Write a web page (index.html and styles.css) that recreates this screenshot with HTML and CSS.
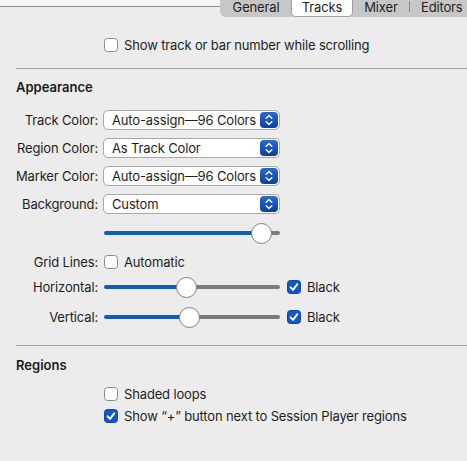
FILE: index.html
```html
<!DOCTYPE html>
<html>
<head>
<meta charset="utf-8">
<link rel="stylesheet" href="styles.css">
</head>
<body>
<div class="titlebar">
  <div class="rule"></div>
  <nav class="tabs">
    <span class="tab general">General</span>
    <span class="tab sel">Tracks</span>
    <span class="tab mixer">Mixer</span>
    <span class="divider"></span>
    <span class="tab editors">Editors</span>
  </nav>
</div>

<div class="top-option">
  <span class="check"></span>
  <span class="check-label">Show track or bar number while scrolling</span>
</div>

<hr class="sep first-sep">

<h2 class="heading">Appearance</h2>

<div class="form">
  <div class="row">
    <span class="label">Track Color:</span>
    <div class="popup"><span class="popup-text">Auto-assign—96 Colors</span><span class="stepper"><svg width="18" height="18" viewBox="0 0 18 18"><path d="M6.2 7.2 L9 4.6 L11.8 7.2 M6.2 10.8 L9 13.4 L11.8 10.8" fill="none" stroke="#fff" stroke-width="1.4" stroke-linecap="round" stroke-linejoin="round"/></svg></span></div>
  </div>
  <div class="row">
    <span class="label">Region Color:</span>
    <div class="popup"><span class="popup-text">As Track Color</span><span class="stepper"><svg width="18" height="18" viewBox="0 0 18 18"><path d="M6.2 7.2 L9 4.6 L11.8 7.2 M6.2 10.8 L9 13.4 L11.8 10.8" fill="none" stroke="#fff" stroke-width="1.4" stroke-linecap="round" stroke-linejoin="round"/></svg></span></div>
  </div>
  <div class="row">
    <span class="label">Marker Color:</span>
    <div class="popup"><span class="popup-text">Auto-assign—96 Colors</span><span class="stepper"><svg width="18" height="18" viewBox="0 0 18 18"><path d="M6.2 7.2 L9 4.6 L11.8 7.2 M6.2 10.8 L9 13.4 L11.8 10.8" fill="none" stroke="#fff" stroke-width="1.4" stroke-linecap="round" stroke-linejoin="round"/></svg></span></div>
  </div>
  <div class="row">
    <span class="label">Background:</span>
    <div class="popup"><span class="popup-text">Custom</span><span class="stepper"><svg width="18" height="18" viewBox="0 0 18 18"><path d="M6.2 7.2 L9 4.6 L11.8 7.2 M6.2 10.8 L9 13.4 L11.8 10.8" fill="none" stroke="#fff" stroke-width="1.4" stroke-linecap="round" stroke-linejoin="round"/></svg></span></div>
  </div>
  <div class="row slider-row bg-slider">
    <span class="label"></span>
    <div class="slider" style="--pos:157px"><span class="fill"></span><span class="rest"></span><span class="thumb"></span></div>
  </div>
  <div class="row grid-row">
    <span class="label">Grid Lines:</span>
    <span class="check"></span>
    <span class="check-label">Automatic</span>
  </div>
  <div class="row slider-row h-row">
    <span class="label">Horizontal:</span>
    <div class="slider" style="--pos:82px"><span class="fill"></span><span class="rest"></span><span class="thumb"></span></div>
    <span class="check on"><svg width="14" height="14" viewBox="0 0 14 14"><path d="M3.6 7.3 L6 9.9 L10.4 4.2" fill="none" stroke="#fff" stroke-width="1.9" stroke-linecap="round" stroke-linejoin="round"/></svg></span>
    <span class="check-label">Black</span>
  </div>
  <div class="row slider-row v-row">
    <span class="label">Vertical:</span>
    <div class="slider" style="--pos:85px"><span class="fill"></span><span class="rest"></span><span class="thumb"></span></div>
    <span class="check on"><svg width="14" height="14" viewBox="0 0 14 14"><path d="M3.6 7.3 L6 9.9 L10.4 4.2" fill="none" stroke="#fff" stroke-width="1.9" stroke-linecap="round" stroke-linejoin="round"/></svg></span>
    <span class="check-label">Black</span>
  </div>
</div>

<hr class="sep second-sep">

<h2 class="heading regions-heading">Regions</h2>

<div class="options">
  <div class="option">
    <span class="check"></span>
    <span class="check-label">Shaded loops</span>
  </div>
  <div class="option">
    <span class="check on"><svg width="14" height="14" viewBox="0 0 14 14"><path d="M3.6 7.3 L6 9.9 L10.4 4.2" fill="none" stroke="#fff" stroke-width="1.9" stroke-linecap="round" stroke-linejoin="round"/></svg></span>
    <span class="check-label">Show “+” button next to Session Player regions</span>
  </div>
</div>
</body>
</html>
```

FILE: styles.css
```css
* { box-sizing: border-box; }

html, body {
  margin: 0;
  padding: 0;
  background: #ececec;
  color: #1e1e1e;
  font-family: Inter, "Liberation Sans", Arial, sans-serif;
  font-size: 13px;
  letter-spacing: -0.15px;
  width: 467px;
  height: 461px;
  overflow: hidden;
}

/* ---------- title / tab bar ---------- */
.titlebar {
  display: flex;
  height: 17px;
}

.rule {
  flex: 1;
  height: 7px;
  background: #f5f5f5;
  border-bottom: 1px solid #8e8e8e;
}

.tabs {
  width: 247px;
  flex: none;
  height: 17px;
  background: #c7c7c7;
  border-bottom-left-radius: 6px;
  display: flex;
  align-items: stretch;
  padding-left: 1px;
  white-space: nowrap;
  overflow: hidden;
}

.tab {
  flex: none;
  display: flex;
  align-items: center;
  justify-content: center;
  line-height: 13px;
  padding-bottom: 3px;
  color: #1e1e1e;
}

.tab.general { width: 70px; }

.tab.sel {
  width: 62px;
  background: #ffffff;
  border: 1px solid #9f9f9f;
  border-top: none;
  border-radius: 0 0 5px 5px;
  padding-bottom: 2px;
}

.tab.mixer { width: 56px; }

.divider {
  flex: none;
  width: 1px;
  height: 11px;
  margin-top: 1px;
  background: #8a8a8a;
}

.tab.editors {
  width: 57px;
  justify-content: flex-start;
  padding-left: 11px;
}

/* ---------- checkbox ---------- */
.check {
  width: 14px;
  height: 14px;
  flex: none;
  border-radius: 3.5px;
  background: #ffffff;
  border: 1px solid #8a8a8a;
  display: inline-flex;
  align-items: center;
  justify-content: center;
}

.check.on {
  background: #1456c2;
  border: 1px solid #0d47a6;
}

.check.on svg { display: block; margin: -1px; }

.check-label {
  margin-left: 6px;
  white-space: nowrap;
  line-height: 16px;
}

/* ---------- top option ---------- */
.top-option {
  display: flex;
  align-items: center;
  height: 20px;
  margin-top: 18px;
  padding-left: 104px;
}

/* ---------- separators and headings ---------- */
.sep {
  border: none;
  height: 1px;
  background: #a6a6a6;
  margin: 0 0 0 16px;
}

.first-sep { margin-top: 13px; }

.heading {
  margin: 10px 0 0 16px;
  font-size: 13px;
  font-weight: 600;
  letter-spacing: 0;
  line-height: 16px;
  height: 16px;
  color: #1a1a1a;
}

/* ---------- form ---------- */
.form {
  margin-top: 15px;
  display: flex;
  flex-direction: column;
  gap: 8px;
}

.row {
  display: flex;
  align-items: center;
  height: 20px;
}

.label {
  width: 98px;
  flex: none;
  text-align: right;
  margin-right: 5px;
  white-space: nowrap;
}

.popup {
  width: 177px;
  height: 20px;
  background: #ffffff;
  border: 1px solid #a8a8a8;
  border-radius: 5px;
  display: flex;
  align-items: center;
  padding-left: 8px;
  padding-right: 1px;
}

.popup-text {
  flex: 1;
  white-space: nowrap;
  line-height: 16px;
}

.stepper {
  width: 18px;
  height: 16px;
  border-radius: 4px;
  background: linear-gradient(#2a69d2, #0c3f9e);
  display: flex;
  align-items: center;
  justify-content: center;
}

.stepper svg { display: block; }

/* ---------- slider ---------- */
.slider-row { height: 22px; }
.bg-slider { margin-top: 0; }
.grid-row { height: 16px; margin-top: 2px; }
.h-row { margin-top: -2px; }

.slider {
  position: relative;
  width: 176px;
  height: 22px;
  margin-left: 1px;
  display: flex;
  align-items: center;
}

.fill {
  width: var(--pos);
  height: 4px;
  background: #0f5db6;
  border-radius: 2px 0 0 2px;
}

.rest {
  flex: 1;
  height: 4px;
  background: #7a7a7a;
  border-radius: 0 2px 2px 0;
}

.thumb {
  position: absolute;
  left: calc(var(--pos) - 10.5px);
  top: 0.5px;
  width: 21px;
  height: 21px;
  border-radius: 50%;
  background: #ffffff;
  border: 1px solid #7d7d7d;
}

.slider-row .check { margin-left: 7px; }

.grid-row .check { margin-left: 1px; }

/* ---------- regions options ---------- */
.second-sep { margin-top: 17px; }

.regions-heading { margin-top: 11px; }

.options {
  margin-top: 13px;
  padding-left: 104px;
  display: flex;
  flex-direction: column;
  gap: 6px;
}

.option {
  display: flex;
  align-items: center;
  height: 16px;
}
```
